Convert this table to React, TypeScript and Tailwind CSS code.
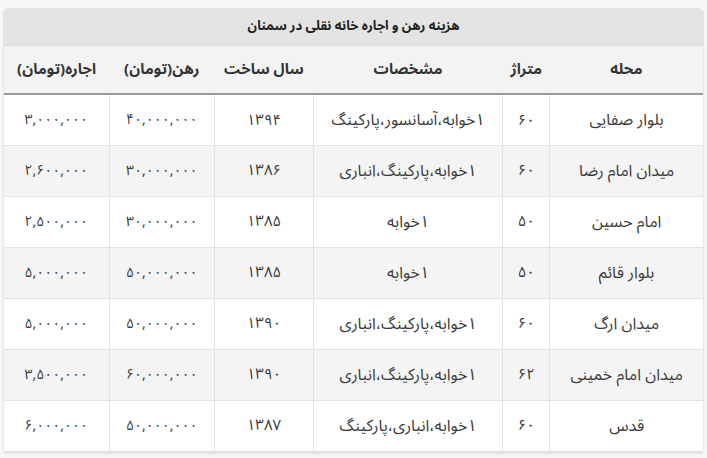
const rows = [
  { area: 'بلوار صفایی', size: '۶۰', features: '۱خوابه،آسانسور،پارکینگ', year: '۱۳۹۴', deposit: '۴۰,۰۰۰,۰۰۰', rent: '۳,۰۰۰,۰۰۰' },
  { area: 'میدان امام رضا', size: '۶۰', features: '۱خوابه،پارکینگ،انباری', year: '۱۳۸۶', deposit: '۳۰,۰۰۰,۰۰۰', rent: '۲,۶۰۰,۰۰۰' },
  { area: 'امام حسین', size: '۵۰', features: '۱خوابه', year: '۱۳۸۵', deposit: '۳۰,۰۰۰,۰۰۰', rent: '۲,۵۰۰,۰۰۰' },
  { area: 'بلوار قائم', size: '۵۰', features: '۱خوابه', year: '۱۳۸۵', deposit: '۵۰,۰۰۰,۰۰۰', rent: '۵,۰۰۰,۰۰۰' },
  { area: 'میدان ارگ', size: '۶۰', features: '۱خوابه،پارکینگ،انباری', year: '۱۳۹۰', deposit: '۵۰,۰۰۰,۰۰۰', rent: '۵,۰۰۰,۰۰۰' },
  { area: 'میدان امام خمینی', size: '۶۲', features: '۱خوابه،پارکینگ،انباری', year: '۱۳۹۰', deposit: '۶۰,۰۰۰,۰۰۰', rent: '۳,۵۰۰,۰۰۰' },
  { area: 'قدس', size: '۶۰', features: '۱خوابه،انباری،پارکینگ', year: '۱۳۸۷', deposit: '۵۰,۰۰۰,۰۰۰', rent: '۶,۰۰۰,۰۰۰' },
]

const headers = ['محله', 'متراژ', 'مشخصات', 'سال ساخت', 'رهن(تومان)', 'اجاره(تومان)']

export default function App() {
  return (
    <div
      dir="rtl"
      className="w-[707px] h-[458px] bg-[#f7f7f7] pt-2 px-[3px] text-[#333]"
      style={{ fontFamily: '"Noto Sans Arabic", "DejaVu Sans", sans-serif' }}
    >
      {/* عنوان جدول */}
      <div className="h-[38px] rounded-t-md bg-[#e4e4e4] flex items-center justify-center text-[13px] font-bold text-[#222]">
        هزینه رهن و اجاره خانه نقلی در سمنان
      </div>
      <div className="mx-px bg-white shadow-[0_1px_3px_rgba(0,0,0,0.15)]">
        <table className="w-full table-fixed border-collapse">
          <colgroup>
            <col className="w-[153px]" />
            <col className="w-[47px]" />
            <col className="w-[189px]" />
            <col className="w-[99px]" />
            <col className="w-[105px]" />
            <col className="w-[105px]" />
          </colgroup>
          <thead>
            <tr className="h-[48px] bg-[#f3f3f3] border-b-2 border-[#999]">
              {headers.map(h => (
                <th key={h} className="text-[15px] font-bold text-center text-[#333] whitespace-nowrap">
                  {h}
                </th>
              ))}
            </tr>
          </thead>
          <tbody>
            {rows.map((r, i) => (
              <tr key={r.area} className={`h-[51px] border-b border-[#e2e2e2] ${i % 2 === 1 ? 'bg-[#f4f4f4]' : 'bg-white'}`}>
                {[r.area, r.size, r.features, r.year, r.deposit, r.rent].map((v, j) => (
                  <td
                    key={j}
                    className={`text-center text-[#3a3a3a] whitespace-nowrap ${j === 0 || j === 2 ? 'text-[16px]' : j >= 4 ? 'text-[14px]' : 'text-[15px]'} ${j < 5 ? 'border-l border-[#e2e2e2]' : ''}`}
                  >
                    {v}
                  </td>
                ))}
              </tr>
            ))}
          </tbody>
        </table>
      </div>
    </div>
  )
}
